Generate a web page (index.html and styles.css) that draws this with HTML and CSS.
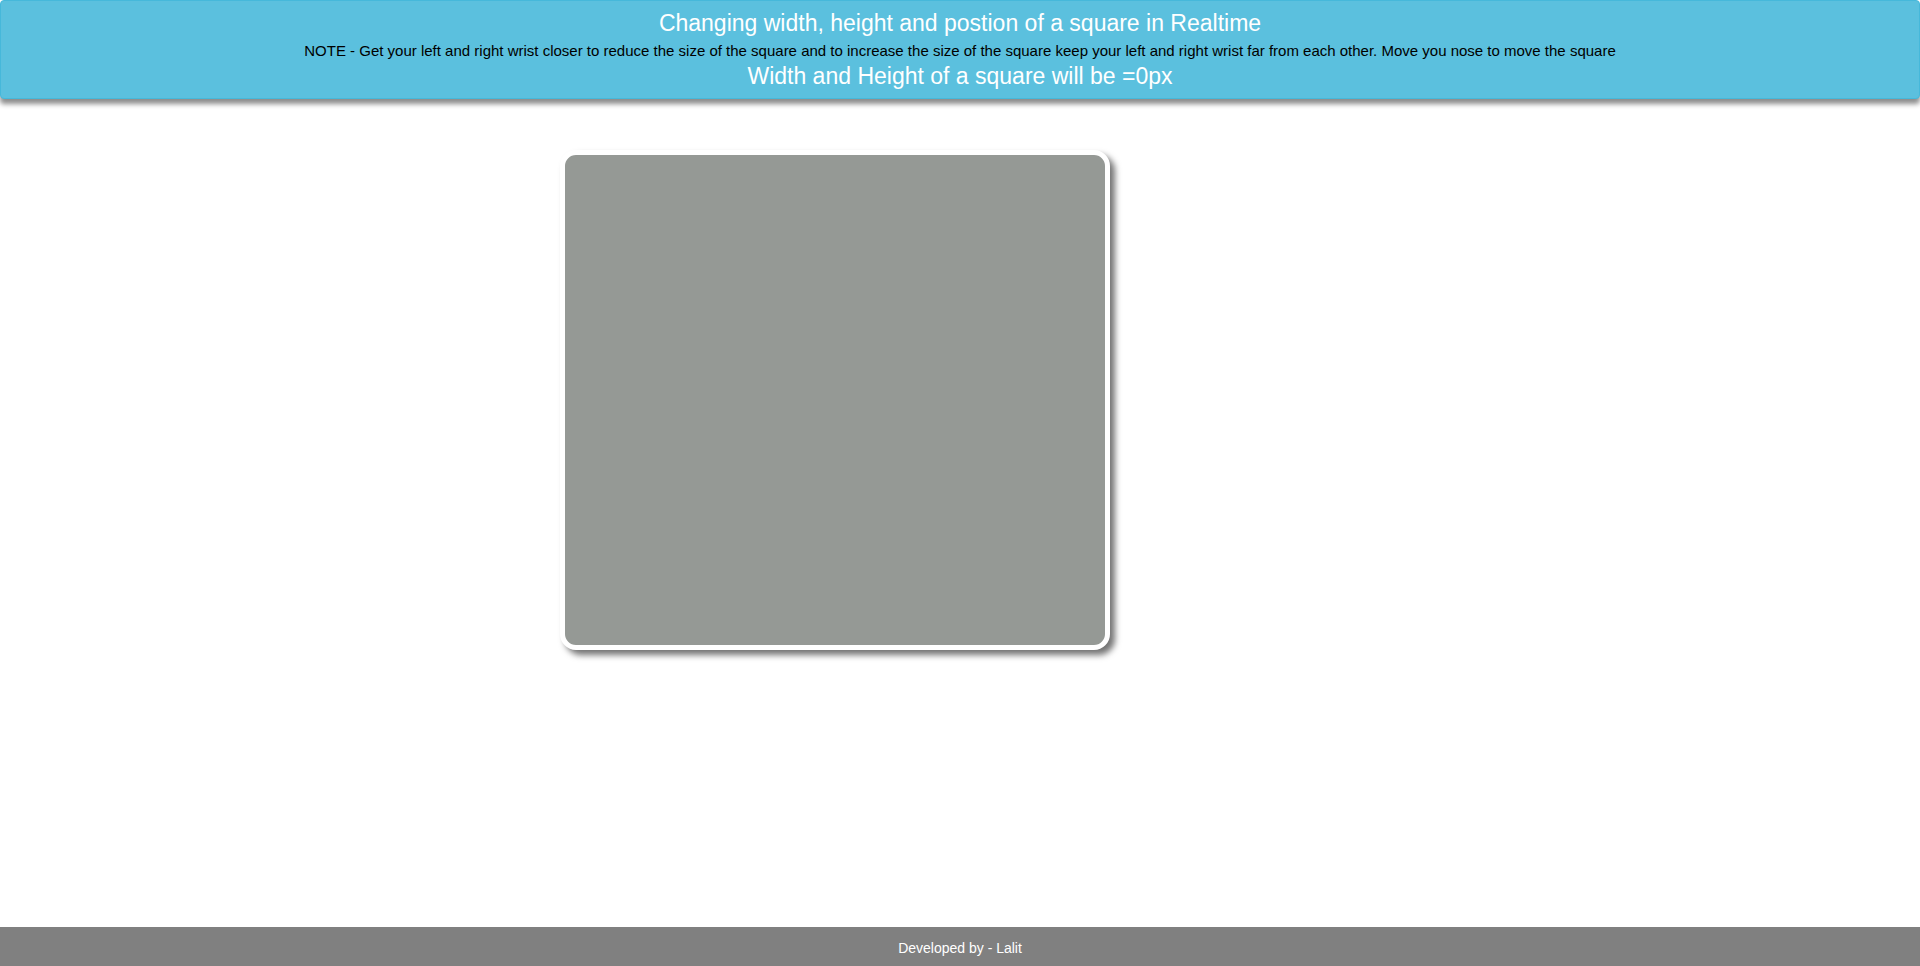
FILE: index.html
```html
<!DOCTYPE html>
<html>
<head>
<meta charset="utf-8">
<title>Square</title>
<link rel="stylesheet" href="styles.css">
</head>
<body>
<div class="page">
  <header class="panel">
    <div class="title">Changing width, height and postion of a square in Realtime</div>
    <div class="note">NOTE - Get your left and right wrist closer to reduce the size of the square and to increase the size of the square keep your left and right wrist far from each other. Move you nose to move the square</div>
    <div class="size">Width and Height of a square will be =0px</div>
  </header>
  <main class="stage">
    <div class="video"></div>
  </main>
  <footer class="footer">Developed by - Lalit</footer>
</div>
</body>
</html>
```

FILE: styles.css
```css
html, body {
  margin: 0;
  padding: 0;
  background: #ffffff;
  font-family: "Liberation Sans", Arial, sans-serif;
}
.page {
  display: flex;
  flex-direction: column;
  min-height: 966px;
}
.panel {
  background: #5bc0de;
  border: 1px solid #46b8da;
  border-radius: 4px;
  box-shadow: 0 5px 5px rgba(0, 0, 0, 0.45);
  display: flex;
  flex-direction: column;
  align-items: center;
  padding-top: 8px;
  height: 89px;
}
.title {
  color: #ffffff;
  font-size: 23px;
  line-height: 28px;
}
.note {
  color: #000000;
  font-size: 15px;
  line-height: 28px;
}
.size {
  color: #ffffff;
  font-size: 23px;
  line-height: 22px;
}
.stage {
  padding-top: 51px;
  padding-left: 560px;
}
.video {
  width: 540px;
  height: 490px;
  background: #959995;
  border: 5px solid #ffffff;
  border-radius: 16px;
  box-shadow: 5px 5px 6px rgba(0, 0, 0, 0.55);
}
.footer {
  margin-top: auto;
  height: 39px;
  box-sizing: border-box;
  padding-top: 2px;
  background: #808080;
  color: #ffffff;
  font-size: 14px;
  display: flex;
  align-items: center;
  justify-content: center;
}
```
